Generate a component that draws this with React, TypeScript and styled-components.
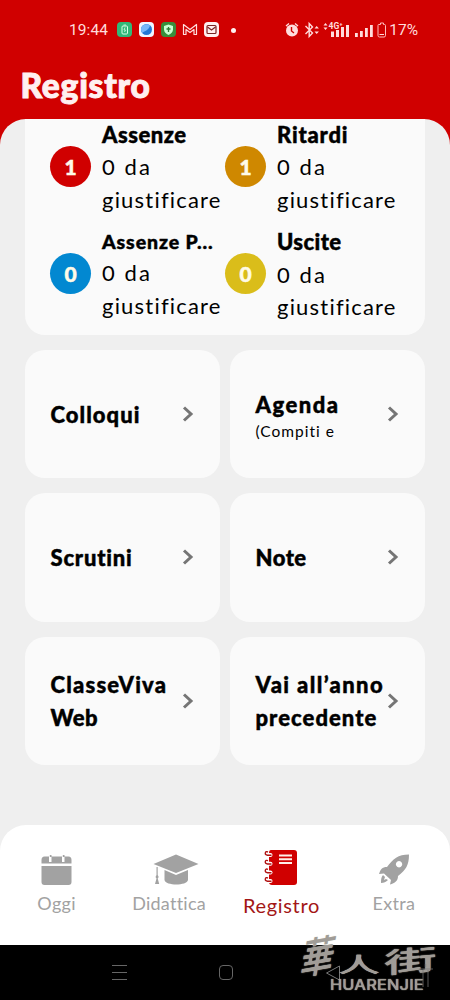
import React from 'react';
import styled, { createGlobalStyle } from 'styled-components';

const Global = createGlobalStyle`
  * { box-sizing: border-box; }
  body { margin: 0; background: #000; font-family: Lato, "Noto Sans", sans-serif; color: #000; }
`;

const Screen = styled.div`
  position: relative;
  width: 450px;
  height: 1000px;
  display: flex;
  flex-direction: column;
  overflow: hidden;
  background: #d00000;
`;

const Header = styled.header`
  height: 119px;
  flex: none;
  color: #fff0f0;
`;

const StatusBar = styled.div`
  height: 60px;
  padding: 0 32px 0 69px;
  display: flex;
  align-items: center;
  justify-content: space-between;
  font-family: Roboto, sans-serif;
  font-size: 15.5px;
  color: #ffdcdc;
`;

const StatusGroup = styled.div<{ $gap: number }>`
  display: flex;
  align-items: center;
  gap: ${p => p.$gap}px;
`;

const Clock = styled.span`
  letter-spacing: 0.1px;
  margin-right: 3px;
`;

const Dot = styled.i`
  width: 5px;
  height: 5px;
  margin-left: 6px;
  border-radius: 50%;
  background: #fff0f0;
`;

const Title = styled.h1`
  margin: 0;
  padding-left: 20.5px;
  font-size: 33.5px;
  font-weight: 900;
  line-height: 50px;
  letter-spacing: 0.75px;
  -webkit-text-stroke: 1px currentColor;
`;

const Content = styled.main`
  flex: none;
  height: 706px;
  padding: 0 25px;
  background: #efefef;
  border-radius: 26px 26px 0 0;
  overflow: hidden;
`;

const Summary = styled.section`
  height: 215.5px;
  padding: 0 0 0 25px;
  display: grid;
  grid-template-columns: 175px 175px;
  grid-template-rows: 97.5px 97.5px;
  row-gap: 10px;
  background: #fafafa;
  border-radius: 0 0 20px 20px;
`;

const Stat = styled.div`
  display: flex;
  gap: 11px;
`;

const Badge = styled.div<{ $color: string }>`
  flex: none;
  width: 41px;
  height: 41px;
  margin-top: 26.5px;
  border-radius: 50%;
  display: flex;
  align-items: center;
  justify-content: center;
  background: ${p => p.$color};
  color: #fffbe8;
  font-size: 21px;
  font-weight: 900;
  -webkit-text-stroke: 0.5px currentColor;
`;

const Lines = styled.div`
  display: flex;
  flex-direction: column;
  white-space: nowrap;
`;

const StatLines = styled(Lines)`
  margin-top: -0.5px;
`;

const Line = styled.span<{ $track?: number; $bold?: boolean; $size?: number; $height?: number }>`
  font-size: ${p => p.$size ?? 22}px;
  line-height: ${p => p.$height ?? 32.5}px;
  font-weight: ${p => (p.$bold ? 900 : 400)};
  letter-spacing: ${p => p.$track ?? 0}px;
  -webkit-text-stroke: ${p => (p.$bold ? '0.45px currentColor' : '0')};
`;

const Grid = styled.section`
  margin-top: 15.3px;
  display: grid;
  grid-template-columns: 195px 195px;
  grid-auto-rows: 128.3px;
  gap: 15.2px 10px;
`;

const Card = styled.button`
  border: 0;
  padding: 2px 25px 0 25.5px;
  display: flex;
  align-items: center;
  text-align: left;
  font: inherit;
  color: inherit;
  background: #fafafa;
  border-radius: 20px;
`;

const Arrow = styled.svg`
  flex: none;
  width: 12px;
  height: 18px;
  margin: -2px 1px 0 auto;
`;

const CardText = styled(Lines)`
  width: 131px;
`;

const Note = styled.span`
  margin-top: -1px;
  font-size: 15.5px;
  line-height: 20px;
  letter-spacing: 1px;
`;

const NavBack = styled.div`
  flex: none;
  background: #efefef;
`;

const Nav = styled.nav`
  height: 120px;
  padding: 0 0.5px;
  background: #fff;
  border-radius: 26px 26px 0 0;
  display: grid;
  grid-template-columns: repeat(4, 112.4px);
`;

const Tab = styled.div<{ $active?: boolean }>`
  display: flex;
  flex-direction: column;
  align-items: center;
  padding-top: ${p => (p.$active ? 24 : 29)}px;
  color: ${p => (p.$active ? '#d00000' : '#a2a2a2')};
  svg { display: block; }
`;

const TabLabel = styled.span<{ $active?: boolean; $track: number }>`
  margin-top: ${p => (p.$active ? 6 : 4.5)}px;
  font-size: ${p => (p.$active ? 20 : 18)}px;
  line-height: 26px;
  letter-spacing: ${p => p.$track}px;
  color: ${p => (p.$active ? '#a31616' : '#a2a2a2')};
`;

const SystemBar = styled.footer`
  flex: none;
  height: 55px;
  padding: 0 109px 0 111px;
  background: #000;
  display: flex;
  align-items: center;
  justify-content: space-between;
`;

const Watermark = styled.div`
  position: absolute;
  left: 296px;
  top: 930px;
  width: 150px;
  height: 66px;
  color: #a09c97;
  font-family: "Noto Sans CJK SC", sans-serif;
  text-shadow: 0 0 1px #d9d6c8;
`;

const Brush = styled.span<{ $x: number; $y: number; $size: number; $shape: string }>`
  position: absolute;
  left: ${p => p.$x}px;
  top: ${p => p.$y}px;
  font-size: ${p => p.$size}px;
  line-height: 1;
  font-weight: 500;
  transform-origin: 0 0;
  transform: ${p => p.$shape};
`;

const Latin = styled.span`
  position: absolute;
  left: 34px;
  top: 48px;
  font-family: Inter, sans-serif;
  font-size: 14px;
  font-weight: 500;
  line-height: 14px;
  letter-spacing: 0.15px;
  transform-origin: 0 0;
  transform: scaleX(1.17);
`;

const Person = styled.svg`
  position: absolute;
  left: 121px;
  top: 32px;
`;

const stats = [
  { n: 1, color: '#d00000', title: 'Assenze', track: 0.5 },
  { n: 1, color: '#cf8800', title: 'Ritardi', track: 0.8 },
  { n: 0, color: '#0288d1', title: 'Assenze P...', track: 0.9, size: 19.5, height: 31 },
  { n: 0, color: '#dabd1a', title: 'Uscite', track: 0.4 },
];

const cards: { lines: [string, number][]; note?: string }[] = [
  { lines: [['Colloqui', 1.05]] },
  { lines: [['Agenda', 1.5]], note: '(Compiti e' },
  { lines: [['Scrutini', 0.8]] },
  { lines: [['Note', 0.5]] },
  { lines: [['ClasseViva', 1.2], ['Web', 0.4]] },
  { lines: [['Vai all’anno', 1.4], ['precedente', 1.05]] },
];

const StatusIcons = () => (
  <svg width="102" height="18" viewBox="0 0 102 18" fill="none">
    <rect x="0" y="1" width="15" height="15" rx="4" fill="#31b878" />
    <rect x="5" y="5" width="5.5" height="8" rx="1" stroke="#d9ffe9" />
    <path d="M6.500 4h2.500M8 6.500 7 9h1.500L7.500 11" stroke="#d9ffe9" strokeWidth=".8" />
    <rect x="22" y="1" width="15" height="15" rx="4" fill="#eef5ff" />
    <circle cx="29.500" cy="8.500" r="5.500" fill="#2277d5" />
    <path d="M24 9a5.500 5.500 0 0 1 9-4.500C32 9 28 10 25 12Z" fill="#77b7fa" />
    <rect x="44" y="1" width="15" height="15" rx="4" fill="#388e3c" />
    <path d="M51.500 3.500 56 5v3.500c0 2.500-2 4.200-4.500 5.500-2.500-1.300-4.500-3-4.500-5.500V5Z" fill="#c9ffd4" />
    <path d="M51.500 6v5M49.500 8h4" stroke="#2d7c35" strokeWidth="1.300" />
    <path d="M66.500 13.500v-10l6.500 5 6.500-5v10H77V8.500L73 11.500 69 8.500v5Z" stroke="#ffdede" strokeWidth="1.200" strokeLinejoin="round" />
    <rect x="87" y="1" width="15" height="15" rx="4" fill="#fff0f0" />
    <rect x="90" y="4.500" width="9" height="8" rx="1" stroke="#7a2424" strokeWidth="1.200" />
    <path d="m90.500 6 4 3 4-3" stroke="#7a2424" strokeWidth="1.200" />
  </svg>
);

const SignalIcons = () => (
  <svg width="101" height="18" viewBox="0 0 101 18" fill="none">
    <circle cx="7" cy="9.500" r="6" fill="#ffdcdc" />
    <path d="M1 5 4 2.500M13 5l-3-2.500" stroke="#ffdcdc" strokeWidth="1.400" />
    <path d="M6.500 6v4l2.500 2" stroke="#d00000" strokeWidth="1.400" />
    <path d="m20.500 5 7 7-3.300 3.500v-13L27.500 6l-7 7" stroke="#ffdcdc" strokeWidth="1.400" />
    <path d="m29.500 7.500 2.200-2.500 2.200 2.500ZM29.500 10.500l2.200 2.500 2.200-2.500ZM38.500 4.500l2-2.500 2 2.500ZM38.500 6.500l2 2.500 2-2.500Z" fill="#ffdcdc" />
    <path d="M46 10.500h3V16h-3ZM51 9h3v7h-3ZM56 6h3v10h-3ZM61 4h3v12h-3ZM70 12h2.800v4H70ZM75 10h2.800v6H75ZM80 7h2.800v9H80ZM85 4h2.800v12H85Z" fill="#ffdcdc" />
    <text x="43.500" y="8.300" fill="#ffdcdc" fontSize="8.500" fontFamily="Roboto" fontWeight="700">4G⁺</text>
    <path d="M93.500 3.500h2v-1.500h3v1.500h1q1 0 1 1v10q0 1.500-1.500 1.500h-4.500q-1.500 0-1.500-1.500v-10q0-1 .5-1Z" stroke="#ffbcbc" />
    <path d="M94.500 13.500h4.500" stroke="#ffdcdc" />
  </svg>
);

const CalendarIcon = () => (
  <svg width="31" height="31" viewBox="0 0 31 31" fill="currentColor">
    <path d="M.5 9.500V6q0-3.500 3-3.500H8V8h2.500V2.500H21V8h2.500V2.500H27.500q3 0 3 3.500v3.500ZM.5 12h30V28q0 3-3 3h-24q-3 0-3-3ZM8.800 1h1.700v2H8.800ZM21.800 1h1.700v2H21.800Z" />
  </svg>
);

const CapIcon = () => (
  <svg width="46" height="31" viewBox="0 0 46 31" fill="currentColor" style={{ marginLeft: 14 }}>
    <path d="M23 .5 45.500 10 23 19 .5 10ZM11.500 16 23 21l12-5V26c-1 6-22.500 6-23.500 0ZM3.500 13h1.200v8l1 2-1 1.500L6.200 30H2l1.500-5.500-1-1.500 1-2Z" />
  </svg>
);

const NotebookIcon = () => (
  <svg width="34" height="37" viewBox="0 0 34 37" fill="none">
    <path d="M7 1h23q3 0 3 3v29q0 3-3 3H8q-3 0-3-3V4q0-3 2-3Z" fill="#d00000" />
    {[4, 12.700, 21.400, 30].map(y => (
      <g key={y}>
        <path d={`M4.500 ${y}h2a2 2 0 0 1 0 4h-2Z`} fill="#fff" />
        <path d={`M7.500 ${y + 2.300}H3.500Q1 ${y + 2} 1.300 ${y}t2.700-1`} stroke="#b01212" strokeWidth="1.400" />
      </g>
    ))}
    <path d="M15 6.500h13M15 10.300h13M15 14h13" stroke="#fff0e9" strokeWidth="1.900" />
  </svg>
);

const RocketIcon = () => (
  <svg width="32" height="31" viewBox="0 0 32 31" fill="currentColor">
    <path fillRule="evenodd" d="M31 .5C20 .5 15 5 9 13 4 13 2.500 15.500 1 20l5-.5 7 6.500-1 4.500c5-1.500 8-3.500 8-8.500C28 16 31 11 31 .5ZM21 7a3.200 3.200 0 1 0 .1 0ZM5 21c-2 2-2 5-2 8 3 0 5-1 7-3l-2-1-2 1 1-3Z" />
  </svg>
);

export default function App() {
  return (
    <Screen>
      <Global />
      <Header>
        <StatusBar>
          <StatusGroup $gap={6}>
            <Clock>19:44</Clock>
            <StatusIcons />
            <Dot />
          </StatusGroup>
          <StatusGroup $gap={3}>
            <SignalIcons />
            <span>17%</span>
          </StatusGroup>
        </StatusBar>
        <Title>Registro</Title>
      </Header>
      <Content>
        <Summary>
          {stats.map(s => (
            <Stat key={s.title}>
              <Badge $color={s.color}>{s.n}</Badge>
              <StatLines>
                <Line $bold $track={s.track} $size={s.size} $height={s.height}>{s.title}</Line>
                <Line $track={2.1}>0 da</Line>
                <Line $track={1.2}>giustificare</Line>
              </StatLines>
            </Stat>
          ))}
        </Summary>
        <Grid>
          {cards.map(c => (
            <Card key={c.lines[0][0]}>
              <CardText>
                {c.lines.map(([text, track]) => (
                  <Line key={text} $bold $track={track}>{text}</Line>
                ))}
                {c.note && <Note>{c.note}</Note>}
              </CardText>
              <Arrow viewBox="0 0 12 18">
                <path d="m2 2.500 7 6.500-7 6.500" fill="none" stroke="#757575" strokeWidth="3" />
              </Arrow>
            </Card>
          ))}
        </Grid>
      </Content>
      <NavBack>
        <Nav>
          <Tab><CalendarIcon /><TabLabel $track={0.4}>Oggi</TabLabel></Tab>
          <Tab><CapIcon /><TabLabel $track={0.25}>Didattica</TabLabel></Tab>
          <Tab $active><NotebookIcon /><TabLabel $active $track={0.65}>Registro</TabLabel></Tab>
          <Tab><RocketIcon /><TabLabel $track={0.3}>Extra</TabLabel></Tab>
        </Nav>
      </NavBack>
      <SystemBar>
        <svg width="16" height="16" stroke="#666" fill="none"><path d="M1 .5h15M1 7.500h15M1 14.500h15" /></svg>
        <svg width="16" height="16" stroke="#666" fill="none"><rect x="1.500" y=".5" width="13" height="14" rx="3.500" /></svg>
        <svg width="16" height="16" stroke="#777" fill="none"><path d="M14.500 1v14L1.500 8Z" /></svg>
      </SystemBar>
      <Watermark>
        <Brush $x={10} $y={6} $size={33} $shape="skew(-10deg, -10deg) scaleY(1.3)">華</Brush>
        <Brush $x={42} $y={22} $size={42} $shape="scaleY(0.5)">人</Brush>
        <Brush $x={88} $y={18} $size={33} $shape="skewY(-5deg) scaleX(1.6) scaleY(0.85)">街</Brush>
        <Latin>HUARENJIE</Latin>
        <Person width="18" height="28" viewBox="0 0 18 28" stroke="#777" strokeWidth="1.500" fill="none" opacity="0.5">
          <path d="M2 7h14M6 8v17M11 8v17M8.500 2v3" />
        </Person>
      </Watermark>
    </Screen>
  );
}
